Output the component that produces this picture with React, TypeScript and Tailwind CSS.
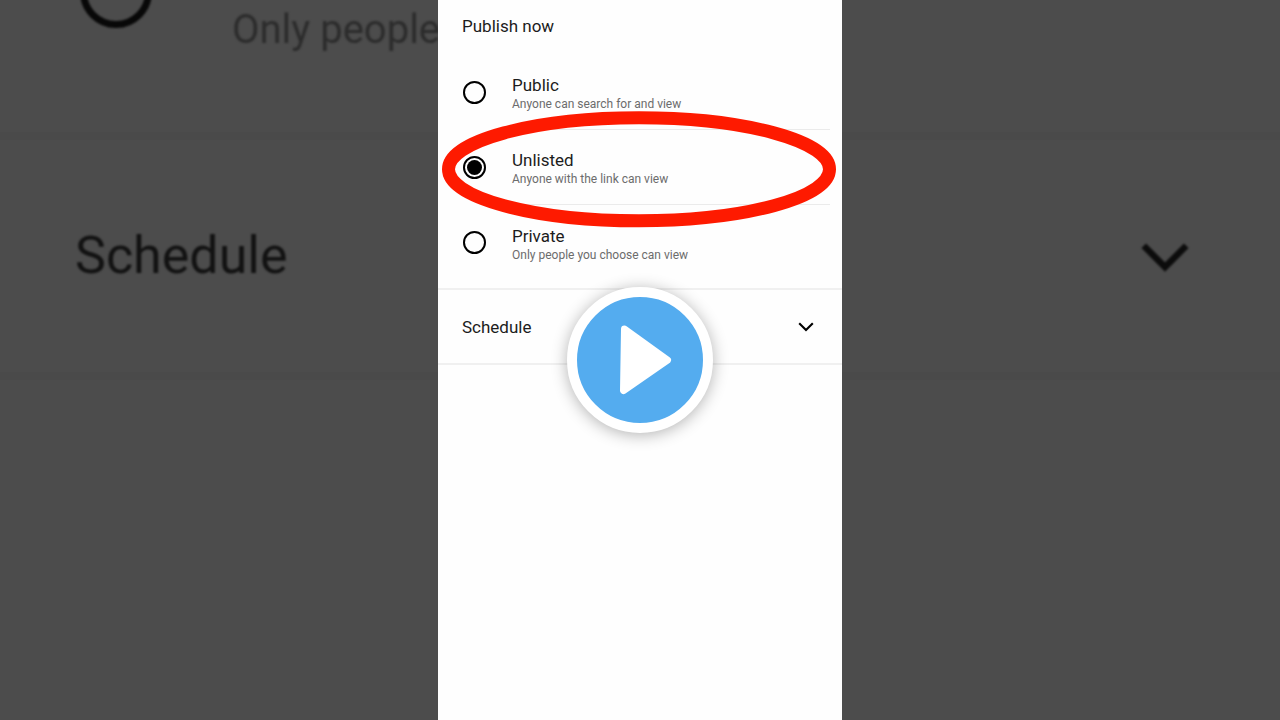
import { useState } from 'react';

interface VisibilityOption {
  value: string;
  title: string;
  description: string;
}

const options: VisibilityOption[] = [
  { value: 'public', title: 'Public', description: 'Anyone can search for and view' },
  { value: 'unlisted', title: 'Unlisted', description: 'Anyone with the link can view' },
  { value: 'private', title: 'Private', description: 'Only people you choose can view' },
];

function Chevron({ className }: { className: string }) {
  return (
    <svg viewBox="0 0 16 10" fill="none" stroke="currentColor" strokeWidth="2.1" className={className} aria-hidden="true">
      <path d="M1.2 1.2 8 8l6.8-6.8" />
    </svg>
  );
}

// Red marker drawn around the highlighted option
function Marker() {
  return (
    <svg
      viewBox="0 0 396 116"
      preserveAspectRatio="none"
      className="pointer-events-none absolute inset-x-1 -inset-y-5 z-10 h-29 w-99 overflow-visible"
      aria-hidden="true"
    >
      <ellipse cx="197" cy="59.3" rx="190.500" ry="51.500" fill="none" stroke="#fe1a00" strokeWidth="13" />
    </svg>
  );
}

function BackdropLeft() {
  return (
    <div className="min-w-0 flex-1 overflow-hidden whitespace-nowrap" aria-hidden="true">
      <div className="flex h-[132px] items-start pl-20">
        <div className="-mt-11 size-[72px] shrink-0 rounded-full border-7 border-[#080808] blur-[1px]" />
        <p className="ml-20 mt-1 text-[40px] leading-[52px] text-[#2c2c2c] blur-[1px]">Only people</p>
      </div>
      <div className="h-2 bg-[#4a4a4a]" />
      <div className="flex h-[232px] items-center pl-[75px]">
        <p className="text-[52px] leading-[60px] text-[#121212] blur-[1px]">Schedule</p>
      </div>
      <div className="h-2 bg-[#4a4a4a]" />
    </div>
  );
}

function BackdropRight() {
  return (
    <div className="min-w-0 flex-1 overflow-hidden" aria-hidden="true">
      <div className="h-[132px]" />
      <div className="h-2 bg-[#4a4a4a]" />
      <div className="flex h-[232px] items-center justify-end pt-1 pr-[90px]">
        <Chevron className="w-[50px] text-[#0c0c0c] blur-[1px]" />
      </div>
      <div className="h-2 bg-[#4a4a4a]" />
    </div>
  );
}

export default function App() {
  const [visibility, setVisibility] = useState('unlisted');
  const [scheduleOpen, setScheduleOpen] = useState(false);

  return (
    <main className="relative flex min-h-screen overflow-hidden bg-[#4c4c4c] font-['Roboto',sans-serif]">
      <BackdropLeft />

      <section className="w-[404px] shrink-0 bg-[#fefefe] text-[#1c1c1c]">
        <h1 className="flex h-[55px] items-center px-6 pb-1 text-[17px] leading-5">Publish now</h1>

        <div role="radiogroup" aria-label="Publish now" className="border-b-2 border-[#f0f0f0] pb-2">
          {options.map((option) => (
            <div key={option.value} className="relative">
              <label className="flex h-[75px] cursor-pointer items-center pl-[25px] pr-3">
                <input
                  type="radio"
                  name="visibility"
                  value={option.value}
                  checked={visibility === option.value}
                  onChange={() => setVisibility(option.value)}
                  className="size-[23px] shrink-0 appearance-none rounded-full border-2 border-black bg-clip-content p-[2px] checked:bg-black"
                />
                <span
                  className={`ml-[26px] flex h-full flex-1 flex-col justify-center pt-1 ${
                    option.value === 'private' ? '' : 'border-b border-[#ebebeb]'
                  }`}
                >
                  <span className="text-[17px] leading-5">{option.title}</span>
                  <span className="text-xs leading-[18px] text-[#6c6c6c]">{option.description}</span>
                </span>
              </label>
              {option.value === 'unlisted' && <Marker />}
            </div>
          ))}
        </div>

        <button
          type="button"
          aria-expanded={scheduleOpen}
          onClick={() => setScheduleOpen(!scheduleOpen)}
          className="flex h-[75px] w-full cursor-pointer items-center justify-between border-b-2 border-[#f0f0f0] pl-6 pr-7 text-[17px] leading-5"
        >
          Schedule
          <Chevron className="w-4 text-black" />
        </button>
      </section>

      <BackdropRight />

      <button
        type="button"
        aria-label="Play"
        className="absolute left-1/2 top-1/2 z-20 size-[146px] -translate-x-1/2 -translate-y-1/2 cursor-pointer rounded-full border-10 border-white bg-[#54acef] shadow-[0_2px_16px_rgba(0,0,0,0.3)]"
      >
        <svg viewBox="0 0 126 126" className="size-full" aria-hidden="true">
          <path
            d="M47.500 32 90.500 63.200 46.500 93.500Z"
            fill="white"
            stroke="white"
            strokeWidth="7"
            strokeLinejoin="round"
          />
        </svg>
      </button>
    </main>
  );
}
